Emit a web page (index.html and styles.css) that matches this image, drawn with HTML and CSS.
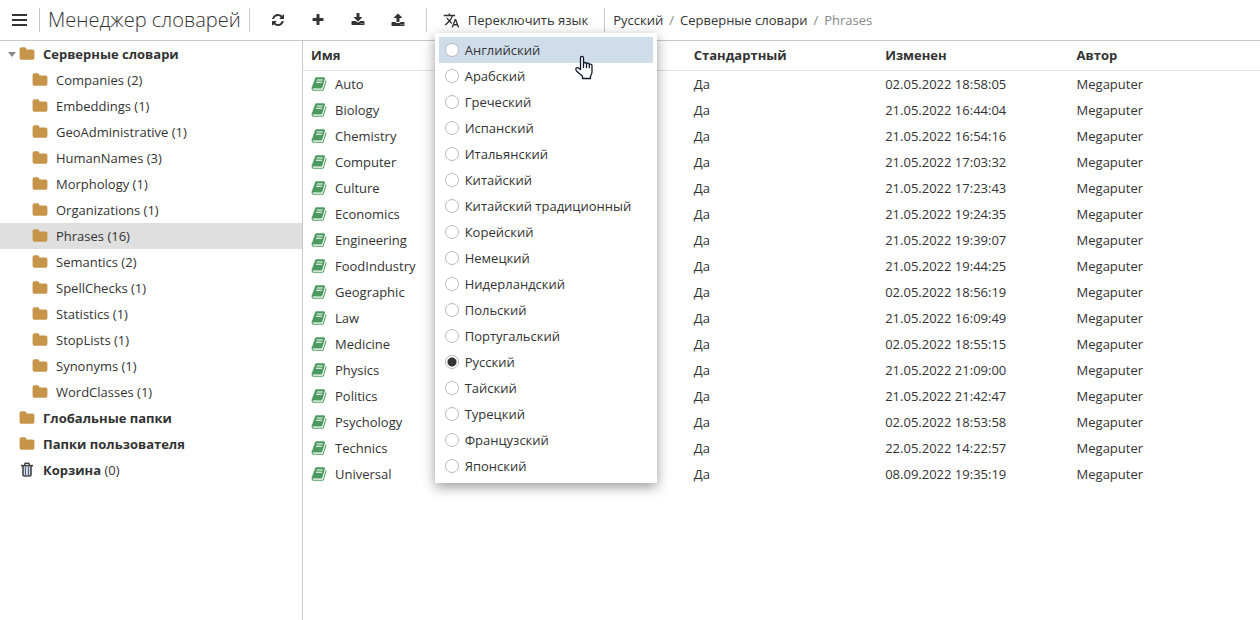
FILE: index.html
```html
<!DOCTYPE html>
<html lang="ru">
<head>
<meta charset="utf-8">
<title>Менеджер словарей</title>
<link rel="stylesheet" href="styles.css">
</head>
<body>
<svg class="sprite" aria-hidden="true">
  <symbol id="refresh" viewBox="0 0 1792 1792"><path d="M1639 1056q0 5-1 7-64 268-268 434.500t-478 166.500q-146 0-282.500-55t-243.500-157l-129 129q-19 19-45 19t-45-19-19-45v-448q0-26 19-45t45-19h448q26 0 45 19t19 45-19 45l-137 137q71 66 161 102t187 36q134 0 250-65t186-179q11-17 53-117 8-23 30-23h192q13 0 22.500 9.500t9.500 22.500zm25-800v448q0 26-19 45t-45 19h-448q-26 0-45-19t-19-45 19-45l138-138q-148-137-349-137-134 0-250 65t-186 179q-11 17-53 117-8 23-30 23h-199q-13 0-22.500-9.500t-9.500-22.500v-7q65-268 270-434.500t480-166.500q146 0 284 55.500t245 156.500l130-129q19-19 45-19t45 19 19 45z"/></symbol>
  <symbol id="plus" viewBox="0 0 1792 1792"><path d="M1600 736v192q0 40-28 68t-68 28h-416v416q0 40-28 68t-68 28h-192q-40 0-68-28t-28-68v-416h-416q-40 0-68-28t-28-68v-192q0-40 28-68t68-28h416v-416q0-40 28-68t68-28h192q40 0 68 28t28 68v416h416q40 0 68 28t28 68z"/></symbol>
  <symbol id="download" viewBox="0 0 1792 1792"><path d="M1344 1344q0-26-19-45t-45-19-45 19-19 45 19 45 45 19 45-19 19-45zm256 0q0-26-19-45t-45-19-45 19-19 45 19 45 45 19 45-19 19-45zm128-224v320q0 40-28 68t-68 28h-1472q-40 0-68-28t-28-68v-320q0-40 28-68t68-28h465l135 136q58 56 136 56t136-56l136-136h464q40 0 68 28t28 68zm-325-569q17 41-14 70l-448 448q-18 19-45 19t-45-19l-448-448q-31-29-14-70 17-39 59-39h256v-448q0-26 19-45t45-19h256q26 0 45 19t19 45v448h256q42 0 59 39z"/></symbol>
  <symbol id="upload" viewBox="0 0 1792 1792"><path d="M1344 1472q0-26-19-45t-45-19-45 19-19 45 19 45 45 19 45-19 19-45zm256 0q0-26-19-45t-45-19-45 19-19 45 19 45 45 19 45-19 19-45zm128-224v320q0 40-28 68t-68 28h-1472q-40 0-68-28t-28-68v-320q0-40 28-68t68-28h427q21 56 70.500 92t110.500 36h256q61 0 110.500-36t70.500-92h427q40 0 68 28t28 68zm-325-648q-17 40-59 40h-256v448q0 26-19 45t-45 19h-256q-26 0-45-19t-19-45v-448h-256q-42 0-59-40-17-39 14-69l448-448q18-19 45-19t45 19l448 448q31 30 14 69z"/></symbol>
  <symbol id="folder" viewBox="0 0 1792 1792"><path d="M1728 608v704q0 92-66 158t-158 66h-1216q-92 0-158-66t-66-158v-960q0-92 66-158t158-66h320q92 0 158 66t66 158v32h672q92 0 158 66t66 158z"/></symbol>
  <symbol id="book" viewBox="0 0 1792 1792"><path d="M1703 478q40 57 18 129l-275 906q-19 64-76.500 107.500t-122.500 43.500h-923q-77 0-148.500-53.500t-99.500-131.500q-24-67-2-127 0-4 3-27t4-37q1-8-3-21.500t-3-19.500q2-11 8-21t16.500-23.500 16.500-23.500q23-38 45-91.500t30-91.500q3-10 .5-30t-.5-28q3-11 17-28t17-23q21-36 42-92t25-90q1-9-2.500-32t.5-28q4-13 22-30.500t22-22.500q19-26 42.500-84.500t27.500-96.500q1-8-3-25.500t-2-26.500q2-8 9-18t18-23 17-21q8-12 16.500-30.500t15-35 16-36 19.500-32 26.500-23.500 36-11.500 47.500 5.500l-1 3q38-9 51-9h761q74 0 114 56t18 130l-274 906q-36 119-71.500 153.500t-128.500 34.500h-869q-27 0-38 15-11 16-1 43 24 70 144 70h923q29 0 56-15.500t35-41.500l300-987q7-22 5-57 38 15 59 43zm-1064 2q-4 13 2 22.500t20 9.500h608q13 0 25.500-9.500t16.500-22.500l21-64q4-13-2-22.500t-20-9.500h-608q-13 0-25.500 9.500t-16.500 22.500zm-83 256q-4 13 2 22.500t20 9.500h608q13 0 25.500-9.500t16.500-22.500l21-64q4-13-2-22.500t-20-9.500h-608q-13 0-25.500 9.500t-16.500 22.500z"/></symbol>
  <symbol id="translate" viewBox="0 0 24 24"><path d="M12.870 15.070l-2.540-2.510.03-.03c1.740-1.940 2.980-4.170 3.710-6.530H17V4h-7V2H8v2H1v1.990h11.170C11.500 7.920 10.440 9.750 9 11.350 8.070 10.320 7.300 9.190 6.690 8h-2c.73 1.630 1.730 3.170 2.980 4.560l-5.090 5.020L4 19l5-5 3.110 3.110.76-2.040zM18.500 10h-2L12 22h2l1.120-3h4.750L21 22h2l-4.500-12zm-2.620 7l1.620-4.330L19.120 17h-3.240z"/></symbol>
  <symbol id="trash" viewBox="0 0 16 16"><path fill="#d6e4f2" d="M4 4h8v10H4z"/><path fill="none" stroke="#444" stroke-width="1.400" d="M5.700 3V2q0-.8.8-.8h3q.8 0 .8.800V3"/><path fill="none" stroke="#444" stroke-width="1.600" d="M4 4v8.800q0 1.200 1.200 1.200h5.600q1.200 0 1.200-1.200V4"/><path fill="#444" d="M2 2.800h12v1.700H2z"/><path fill="none" stroke="#55657a" stroke-width="1.200" d="M6.500 5v8M9.500 5v8"/></symbol>
</svg>

<header class="topbar">
  <button class="menu-toggle" type="button" aria-label="Меню"><span></span><span></span><span></span></button>
  <h1 class="title">Менеджер словарей</h1>
  <div class="tools">
    <button class="tool" type="button" aria-label="Обновить"><svg class="icon"><use href="#refresh"/></svg></button>
    <button class="tool" type="button" aria-label="Добавить"><svg class="icon"><use href="#plus"/></svg></button>
    <button class="tool" type="button" aria-label="Скачать"><svg class="icon"><use href="#download"/></svg></button>
    <button class="tool" type="button" aria-label="Загрузить"><svg class="icon"><use href="#upload"/></svg></button>
  </div>
  <div class="language">
    <button class="language-button" type="button" aria-expanded="true"><svg class="icon-translate"><use href="#translate"/></svg>Переключить язык</button>
    <div class="language-menu" role="radiogroup" aria-label="Переключить язык">
      <label class="option option-hover"><input type="radio" name="lang">Английский</label>
      <label class="option"><input type="radio" name="lang">Арабский</label>
      <label class="option"><input type="radio" name="lang">Греческий</label>
      <label class="option"><input type="radio" name="lang">Испанский</label>
      <label class="option"><input type="radio" name="lang">Итальянский</label>
      <label class="option"><input type="radio" name="lang">Китайский</label>
      <label class="option"><input type="radio" name="lang">Китайский традиционный</label>
      <label class="option"><input type="radio" name="lang">Корейский</label>
      <label class="option"><input type="radio" name="lang">Немецкий</label>
      <label class="option"><input type="radio" name="lang">Нидерландский</label>
      <label class="option"><input type="radio" name="lang">Польский</label>
      <label class="option"><input type="radio" name="lang">Португальский</label>
      <label class="option"><input type="radio" name="lang" checked>Русский</label>
      <label class="option"><input type="radio" name="lang">Тайский</label>
      <label class="option"><input type="radio" name="lang">Турецкий</label>
      <label class="option"><input type="radio" name="lang">Французский</label>
      <label class="option"><input type="radio" name="lang">Японский</label>
      <svg class="pointer" viewBox="0 0 18 24" aria-hidden="true"><path fill="#fff" stroke="#111827" stroke-width="1.300" stroke-linejoin="round" stroke-linecap="round" d="M5.500 14V2.500q0-1.700 1.500-1.700t1.500 1.700V8q.3-1 1.500-1t1.500 1.400q.4-.9 1.500-.8 1.200.1 1.300 1.500.4-.6 1.400-.5 1.300.2 1.300 1.600V16q0 3-1.500 4.500V23h-8v-2.200L1.500 15.500Q.3 13.500 1.200 12.600q1.200-1 2.500.2zM8.500 8v4M11.500 8.500V12M14.300 9.200V12"/></svg>
    </div>
  </div>
  <nav class="crumbs" aria-label="Путь"><a href="#">Русский</a><span class="slash">/</span><a href="#">Серверные словари</a><span class="slash">/</span><span class="current">Phrases</span></nav>
</header>

<div class="workspace">
  <nav class="tree" aria-label="Папки">
    <a class="node root open" href="#"><span class="caret"></span><svg class="folder"><use href="#folder"/></svg><b>Серверные словари</b></a>
    <a class="node child" href="#"><svg class="folder"><use href="#folder"/></svg>Companies (2)</a>
    <a class="node child" href="#"><svg class="folder"><use href="#folder"/></svg>Embeddings (1)</a>
    <a class="node child" href="#"><svg class="folder"><use href="#folder"/></svg>GeoAdministrative (1)</a>
    <a class="node child" href="#"><svg class="folder"><use href="#folder"/></svg>HumanNames (3)</a>
    <a class="node child" href="#"><svg class="folder"><use href="#folder"/></svg>Morphology (1)</a>
    <a class="node child" href="#"><svg class="folder"><use href="#folder"/></svg>Organizations (1)</a>
    <a class="node child selected" href="#"><svg class="folder"><use href="#folder"/></svg>Phrases (16)</a>
    <a class="node child" href="#"><svg class="folder"><use href="#folder"/></svg>Semantics (2)</a>
    <a class="node child" href="#"><svg class="folder"><use href="#folder"/></svg>SpellChecks (1)</a>
    <a class="node child" href="#"><svg class="folder"><use href="#folder"/></svg>Statistics (1)</a>
    <a class="node child" href="#"><svg class="folder"><use href="#folder"/></svg>StopLists (1)</a>
    <a class="node child" href="#"><svg class="folder"><use href="#folder"/></svg>Synonyms (1)</a>
    <a class="node child" href="#"><svg class="folder"><use href="#folder"/></svg>WordClasses (1)</a>
    <a class="node root" href="#"><svg class="folder"><use href="#folder"/></svg><b>Глобальные папки</b></a>
    <a class="node root" href="#"><svg class="folder"><use href="#folder"/></svg><b>Папки пользователя</b></a>
    <a class="node root" href="#"><svg class="folder"><use href="#trash"/></svg><span><b>Корзина</b> (0)</span></a>
  </nav>
  <main class="content">
    <table class="list">
      <thead>
        <tr><th class="name-col">Имя</th><th>Стандартный</th><th>Изменен</th><th>Автор</th></tr>
      </thead>
      <tbody>
        <tr><td><span class="entry"><svg class="book"><use href="#book"/></svg>Auto</span></td><td>Да</td><td>02.05.2022 18:58:05</td><td>Megaputer</td></tr>
        <tr><td><span class="entry"><svg class="book"><use href="#book"/></svg>Biology</span></td><td>Да</td><td>21.05.2022 16:44:04</td><td>Megaputer</td></tr>
        <tr><td><span class="entry"><svg class="book"><use href="#book"/></svg>Chemistry</span></td><td>Да</td><td>21.05.2022 16:54:16</td><td>Megaputer</td></tr>
        <tr><td><span class="entry"><svg class="book"><use href="#book"/></svg>Computer</span></td><td>Да</td><td>21.05.2022 17:03:32</td><td>Megaputer</td></tr>
        <tr><td><span class="entry"><svg class="book"><use href="#book"/></svg>Culture</span></td><td>Да</td><td>21.05.2022 17:23:43</td><td>Megaputer</td></tr>
        <tr><td><span class="entry"><svg class="book"><use href="#book"/></svg>Economics</span></td><td>Да</td><td>21.05.2022 19:24:35</td><td>Megaputer</td></tr>
        <tr><td><span class="entry"><svg class="book"><use href="#book"/></svg>Engineering</span></td><td>Да</td><td>21.05.2022 19:39:07</td><td>Megaputer</td></tr>
        <tr><td><span class="entry"><svg class="book"><use href="#book"/></svg>FoodIndustry</span></td><td>Да</td><td>21.05.2022 19:44:25</td><td>Megaputer</td></tr>
        <tr><td><span class="entry"><svg class="book"><use href="#book"/></svg>Geographic</span></td><td>Да</td><td>02.05.2022 18:56:19</td><td>Megaputer</td></tr>
        <tr><td><span class="entry"><svg class="book"><use href="#book"/></svg>Law</span></td><td>Да</td><td>21.05.2022 16:09:49</td><td>Megaputer</td></tr>
        <tr><td><span class="entry"><svg class="book"><use href="#book"/></svg>Medicine</span></td><td>Да</td><td>02.05.2022 18:55:15</td><td>Megaputer</td></tr>
        <tr><td><span class="entry"><svg class="book"><use href="#book"/></svg>Physics</span></td><td>Да</td><td>21.05.2022 21:09:00</td><td>Megaputer</td></tr>
        <tr><td><span class="entry"><svg class="book"><use href="#book"/></svg>Politics</span></td><td>Да</td><td>21.05.2022 21:42:47</td><td>Megaputer</td></tr>
        <tr><td><span class="entry"><svg class="book"><use href="#book"/></svg>Psychology</span></td><td>Да</td><td>02.05.2022 18:53:58</td><td>Megaputer</td></tr>
        <tr><td><span class="entry"><svg class="book"><use href="#book"/></svg>Technics</span></td><td>Да</td><td>22.05.2022 14:22:57</td><td>Megaputer</td></tr>
        <tr><td><span class="entry"><svg class="book"><use href="#book"/></svg>Universal</span></td><td>Да</td><td>08.09.2022 19:35:19</td><td>Megaputer</td></tr>
      </tbody>
    </table>
  </main>
</div>
</body>
</html>
```
FILE: styles.css
```css
* { box-sizing: border-box; }

body {
  margin: 0;
  min-height: 100vh;
  display: flex;
  flex-direction: column;
  background: #fff;
  color: #333;
  font: 13px/26px "Open Sans", "Noto Sans", sans-serif;
}

button {
  border: 0;
  background: none;
  color: inherit;
  font: inherit;
  cursor: pointer;
}

a { color: inherit; text-decoration: none; }
svg { flex: none; fill: currentColor; }
.sprite { position: absolute; width: 0; height: 0; }

/* Top bar */
.topbar {
  display: flex;
  align-items: center;
  padding: 8px 0;
  border-bottom: 1px solid #c8c8c8;
  line-height: 24px;
}

.menu-toggle {
  display: flex;
  flex-direction: column;
  gap: 3px;
  width: 39px;
  padding: 0 12px;
}
.menu-toggle span { height: 2px; background: #333; }

.title {
  margin: 0;
  padding: 0 8px;
  border-left: 1px solid #c8c8c8;
  font-size: 20px;
  font-weight: 300;
}

.tools {
  display: flex;
  padding: 0 8px;
  border: solid #c8c8c8;
  border-width: 0 1px;
}
.tool {
  display: flex;
  justify-content: center;
  align-items: center;
  width: 40px;
  height: 24px;
  padding: 0;
}
.icon { width: 14px; height: 14px; }

.language { position: relative; }
.language-button {
  display: flex;
  align-items: center;
  gap: 8px;
  padding: 0 16px;
}
.icon-translate { width: 17px; height: 17px; }

.language-menu {
  position: absolute;
  z-index: 2;
  top: 25px;
  left: 8px;
  padding: 4px;
  background: #fff;
  box-shadow: 0 4px 12px rgba(0, 0, 0, .4);
  white-space: nowrap;
}
.option {
  display: flex;
  align-items: center;
  gap: 6px;
  padding: 0 22px 0 6px;
  line-height: 26px;
}
.option-hover { background: #cfdce9; }
.option input {
  appearance: none;
  width: 14px;
  height: 14px;
  margin: 0;
  border: 1px solid #bbb;
  border-radius: 50%;
  background: #fff;
}
.option input:checked { background: radial-gradient(circle, #333 4px, #fff 5px); }

.pointer {
  position: absolute;
  top: 22px;
  left: 140px;
  width: 18px;
  height: 25px;
}

.crumbs {
  display: flex;
  gap: 6px;
  padding: 0 8px;
  border-left: 1px solid #c8c8c8;
}
.slash, .current { color: #888; }

/* Folder tree and list */
.workspace { display: flex; flex: 1; }
.tree {
  flex: none;
  width: 303px;
  border-right: 1px solid #c8c8c8;
}
.node { display: flex; align-items: center; gap: 8px; }
.root { padding-left: 19px; }
.open { gap: 0; padding-left: 8px; }
.open .folder { margin-right: 8px; }
.child { padding-left: 32px; }
.selected { background: #dfdfdf; }
.caret {
  width: 8px;
  margin-right: 3px;
  border: 4px solid transparent;
  border-top: 5px solid #888;
  border-bottom: 0;
}
.folder { width: 16px; height: 16px; color: #c7954a; }

.content { flex: 1; }
.list {
  width: 100%;
  table-layout: fixed;
  border-collapse: separate;
  border-spacing: 0;
}
.name-col { width: 40%; }
.list th {
  padding: 1px 8px 2px;
  border-bottom: 1px solid #dde4ea;
  text-align: left;
}
.list td { padding: 0 8px; }
.entry { display: flex; align-items: center; gap: 8px; }
.book { width: 16px; height: 16px; color: #4d9a60; }
```
